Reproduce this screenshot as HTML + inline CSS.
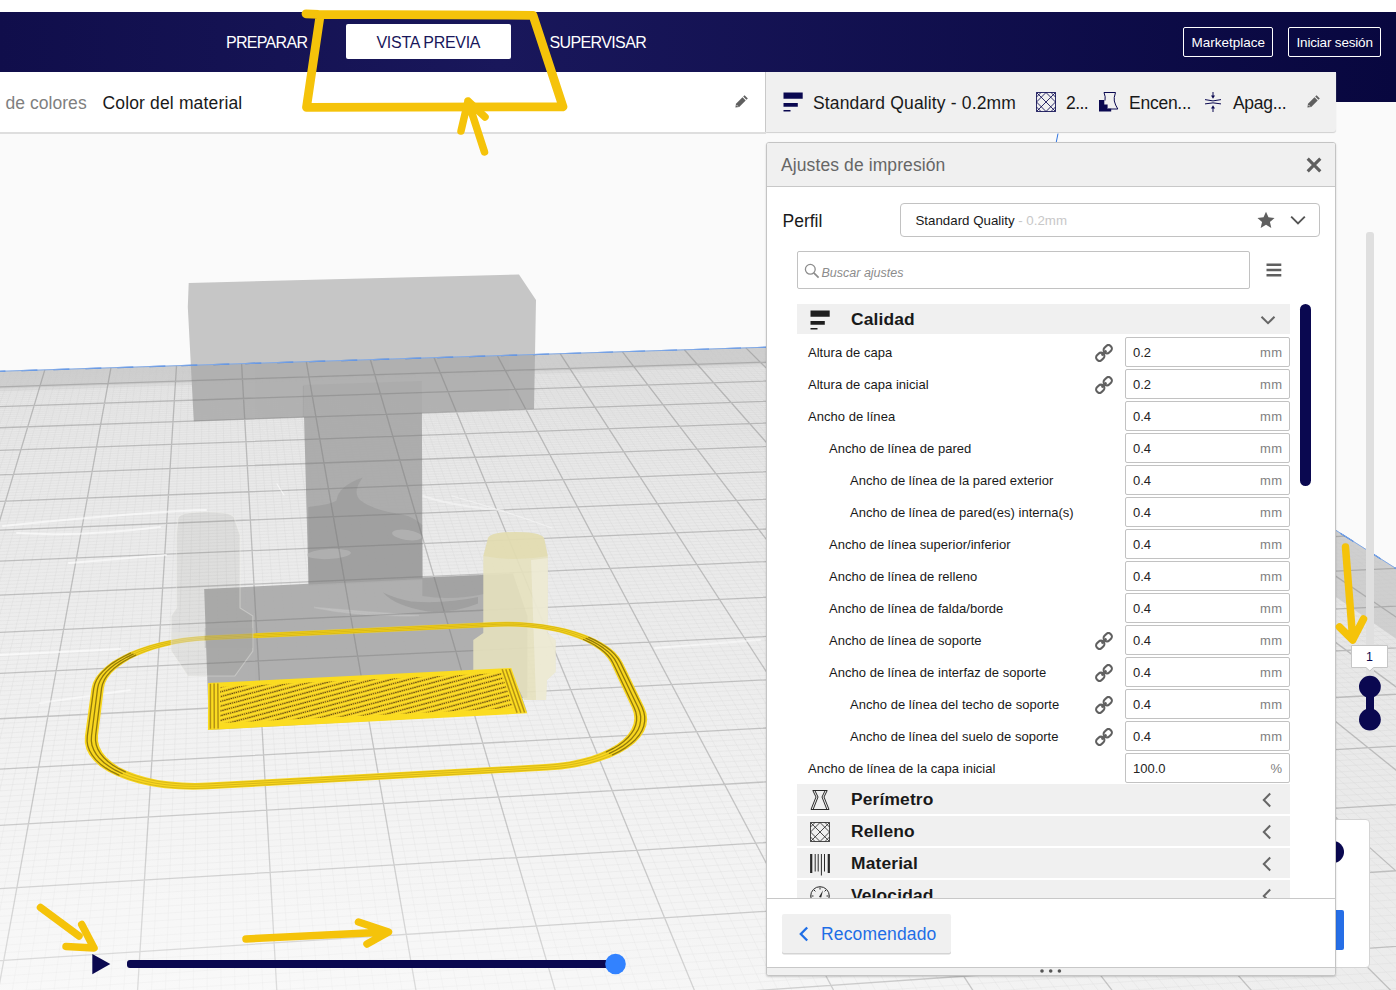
<!DOCTYPE html>
<html lang="es">
<head>
<meta charset="utf-8">
<title>Vista previa</title>
<style>
*{box-sizing:border-box;margin:0;padding:0}
html,body{width:1396px;height:990px;overflow:hidden;background:#fafafa}
body{position:relative;font-family:"Liberation Sans",sans-serif;color:#191919}
.abs{position:absolute}
.t{position:absolute;white-space:nowrap;line-height:1}
#topwhite{left:0;top:0;width:1396px;height:12px;background:#fff}
#header{left:0;top:12px;width:1396px;height:90px;background:linear-gradient(90deg,#100e4b 0,#19175b 500px,#08073f 1396px)}
#actionbar{left:0;top:72px;width:765px;height:60px;background:#fff}
#actionline{left:0;top:132px;width:766px;height:2px;background:#dedede}
#summary{left:766px;top:72px;width:570px;height:60px;background:#f0f0f0;border-radius:0 0 3px 0;box-shadow:0 1px 1px #d0d0d0}
#sumline{left:765px;top:72px;width:1px;height:60px;background:#c8c8c8}
.tab{color:#fff;font-size:16px}
#tabsel{left:346px;top:24px;width:165px;height:35px;background:#fff;border-radius:2px}
.hbtn{border:1px solid #fff;border-radius:2px;height:30px;top:27px}
.sum{font-size:17.5px;top:95px;letter-spacing:.15px}
#panel{left:766px;top:142px;width:570px;height:833.5px;background:#fff;border:1px solid #c4c4c4;border-radius:3px;box-shadow:0 1px 2px rgba(0,0,0,.18)}
#phead{left:767px;top:143px;width:568px;height:44px;background:#f0f0f0;border-bottom:1px solid #c8c8c8;border-radius:2px 2px 0 0}
#listclip{left:767px;top:296px;width:568px;height:602px;overflow:hidden}
#listclip>div{position:absolute;left:-767px;top:-296px;width:1396px;height:990px}
.cat{left:797px;width:493px;height:30px;background:#f0f0f0}
.catname{font-weight:bold;font-size:17.4px;letter-spacing:.15px;left:851px;color:#191919}
.row{font-size:13px;color:#191919;letter-spacing:.03px}
.inp{left:1125px;width:165px;height:30px;border:1px solid #c2c2c2;border-radius:2px;background:#fff}
.val{font-size:13px;left:1133px;color:#232323}
.unit{font-size:13px;color:#7f7f7f;letter-spacing:.4px;margin-right:-.4px}
#pfoot{left:767px;top:898px;width:568px;height:69px;background:#fff;border-top:1px solid #c8c8c8}
#pdrag{left:767px;top:966.5px;width:568px;height:8px;background:#f0f0f0;border-top:1px solid #c8c8c8;border-radius:0 0 2px 2px}
</style>
</head>
<body>
<svg class="abs" style="left:0;top:0" width="1396" height="990" viewBox="0 0 1396 990">
<defs>
<radialGradient id="pfill" gradientUnits="userSpaceOnUse" cx="0" cy="0" r="950" gradientTransform="translate(150 1300) scale(2 1)"><stop offset=".3" stop-color="#f3f3f3"/><stop offset=".4" stop-color="#f2f2f2"/><stop offset=".5" stop-color="#f1f1f1"/><stop offset=".544" stop-color="#f1f1f1"/><stop offset=".737" stop-color="#ebebeb"/><stop offset=".916" stop-color="#e7e7e7"/><stop offset="1" stop-color="#e3e3e3"/></radialGradient>
<radialGradient id="fade" gradientUnits="userSpaceOnUse" cx="0" cy="0" r="950" gradientTransform="translate(150 1300) scale(2 1)"><stop offset=".3" stop-color="#fff" stop-opacity=".5"/><stop offset=".4" stop-color="#fff" stop-opacity=".4"/><stop offset=".5" stop-color="#fff" stop-opacity=".22"/><stop offset=".544" stop-color="#fff" stop-opacity=".14"/><stop offset=".737" stop-color="#fff" stop-opacity=".07"/><stop offset=".916" stop-color="#fff" stop-opacity=".035"/><stop offset="1" stop-color="#fff" stop-opacity="0"/></radialGradient>
<clipPath id="plateclip"><path d="M-362.4 382.6L1034.8 338.8L2117 1027.1L-1277.5 1289.2Z"/></clipPath>
<clipPath id="modelclip"><path d="M188.7 283L519 274.4L536 300L534 409L193.8 421.3L187.8 307ZM303.2 385L421.8 381L422.5 580L308.6 586ZM204.2 589L308.5 583.8L422.5 577.5L513 573.5L527.5 616L527.3 698L522.3 698L527.1 712.2L209 730Z"/></clipPath>
<pattern id="infill" width="2.2" height="4.6" patternUnits="userSpaceOnUse" patternTransform="rotate(-15)"><rect width="2.2" height="4.6" fill="#efc526"/><rect width="2.2" height="1.6" fill="#fde226"/><rect x=".2" y="2.6" width="1.15" height="1.15" fill="#3d3206"/></pattern></defs>
<rect width="1396" height="990" fill="#fafafa"/>
<g id="model-bg" fill="#c6c6c6"><path d="M188.7 283L519 274.4L536 300L534 409L193.8 421.3L187.8 307ZM303.2 385L421.8 381L422.5 580L308.6 586ZM204.2 589L308.5 583.8L422.5 577.5L513 573.5L527.5 616L527.3 698L522.3 698L527.1 712.2L209 730Z"/></g>
<path d="M-362.4 382.6L1034.8 338.8L2117 1027.1L-1277.5 1289.2Z" fill="url(#pfill)"/>
<path d="M-362.4 382.6L1034.8 338.8L1059.4 354.5L-380.9 401ZM967.7 341L1034.8 338.8L2117 1027.1L1970.9 1038.4Z" fill="#cfcfcf"/>
<path d="M-380.9 401L990.3 356.7L993.8 359.1L-383.8 403.9Z" fill="#dbdbdb"/>
<path d="M-355.5 382.4L-1258.6 1287.7M-348.5 382.2L-1239.7 1286.2M-341.6 382L-1220.9 1284.8M-334.7 381.8L-1202.1 1283.3M-327.8 381.5L-1183.3 1281.9M-320.8 381.3L-1164.6 1280.4M-313.9 381.1L-1145.9 1279M-307 380.9L-1127.3 1277.6M-300.1 380.7L-1108.7 1276.1M-286.4 380.2L-1071.6 1273.3M-279.5 380L-1053.1 1271.8M-272.6 379.8L-1034.6 1270.4M-265.7 379.6L-1016.2 1269M-258.9 379.4L-997.8 1267.6M-252 379.2L-979.4 1266.1M-245.2 378.9L-961.1 1264.7M-238.3 378.7L-942.8 1263.3M-231.5 378.5L-924.5 1261.9M-217.8 378.1L-888.1 1259.1M-211 377.9L-870 1257.7M-204.1 377.7L-851.9 1256.3M-197.3 377.5L-833.8 1254.9M-190.5 377.2L-815.7 1253.5M-183.7 377L-797.7 1252.1M-176.9 376.8L-779.8 1250.7M-170.1 376.6L-761.8 1249.3M-163.3 376.4L-743.9 1248M-149.7 376L-708.2 1245.2M-142.9 375.7L-690.4 1243.8M-136.2 375.5L-672.6 1242.5M-129.4 375.3L-654.9 1241.1M-122.6 375.1L-637.2 1239.7M-115.9 374.9L-619.5 1238.4M-109.1 374.7L-601.9 1237M-102.4 374.5L-584.3 1235.6M-95.6 374.3L-566.8 1234.3M-82.2 373.8L-531.7 1231.6M-75.5 373.6L-514.3 1230.2M-68.7 373.4L-496.8 1228.9M-62 373.2L-479.4 1227.5M-55.3 373L-462.1 1226.2M-48.6 372.8L-444.7 1224.9M-41.9 372.6L-427.4 1223.5M-35.2 372.4L-410.2 1222.2M-28.5 372.2L-392.9 1220.9M-15.1 371.7L-358.6 1218.2M-8.5 371.5L-341.4 1216.9M-1.8 371.3L-324.3 1215.6M4.9 371.1L-307.2 1214.3M11.5 370.9L-290.2 1212.9M18.2 370.7L-273.2 1211.6M24.8 370.5L-256.2 1210.3M31.5 370.3L-239.3 1209M38.1 370.1L-222.3 1207.7M51.4 369.7L-188.6 1205.1M58 369.5L-171.8 1203.8M64.7 369.2L-155 1202.5M71.3 369L-138.2 1201.2M77.9 368.8L-121.5 1199.9M84.5 368.6L-104.8 1198.6M91.1 368.4L-88.2 1197.3M97.7 368.2L-71.5 1196.1M104.3 368L-54.9 1194.8M117.5 367.6L-21.8 1192.2M124 367.4L-5.3 1191M130.6 367.2L11.2 1189.7M137.2 367L27.6 1188.4M143.7 366.8L44 1187.1M150.3 366.6L60.4 1185.9M156.9 366.4L76.8 1184.6M163.4 366.1L93.1 1183.4M169.9 365.9L109.4 1182.1M183 365.5L141.9 1179.6M189.5 365.3L158.1 1178.3M196.1 365.1L174.3 1177.1M202.6 364.9L190.5 1175.8M209.1 364.7L206.6 1174.6M215.6 364.5L222.7 1173.4M222.1 364.3L238.7 1172.1M228.6 364.1L254.8 1170.9M235.1 363.9L270.8 1169.6M248.1 363.5L302.7 1167.2M254.6 363.3L318.6 1165.9M261.1 363.1L334.5 1164.7M267.5 362.9L350.4 1163.5M274 362.7L366.2 1162.3M280.5 362.5L382 1161.1M286.9 362.3L397.8 1159.8M293.4 362.1L413.5 1158.6M299.8 361.9L429.2 1157.4M312.7 361.5L460.6 1155M319.1 361.3L476.2 1153.8M325.6 361.1L491.8 1152.6M332 360.9L507.4 1151.4M338.4 360.7L523 1150.2M344.8 360.5L538.5 1149M351.2 360.3L554 1147.8M357.6 360.1L569.4 1146.6M364 359.9L584.9 1145.4M376.8 359.5L615.7 1143M383.2 359.3L631 1141.8M389.6 359.1L646.3 1140.6M396 358.9L661.6 1139.5M402.4 358.7L676.9 1138.3M408.7 358.5L692.2 1137.1M415.1 358.3L707.4 1135.9M421.4 358.1L722.6 1134.8M427.8 357.9L737.7 1133.6M440.5 357.5L768 1131.3M446.8 357.3L783.1 1130.1M453.2 357.1L798.1 1128.9M459.5 356.9L813.2 1127.8M465.8 356.7L828.2 1126.6M472.2 356.5L843.2 1125.5M478.5 356.3L858.1 1124.3M484.8 356.1L873 1123.2M491.1 355.9L887.9 1122M503.7 355.5L917.7 1119.7M510 355.3L932.5 1118.6M516.3 355.1L947.3 1117.4M522.6 354.9L962 1116.3M528.8 354.7L976.8 1115.1M535.1 354.5L991.5 1114M541.4 354.3L1006.2 1112.9M547.7 354.1L1020.9 1111.7M553.9 353.9L1035.5 1110.6M566.4 353.5L1064.7 1108.4M572.7 353.3L1079.3 1107.2M578.9 353.1L1093.8 1106.1M585.2 352.9L1108.3 1105M591.4 352.7L1122.8 1103.9M597.6 352.5L1137.3 1102.8M603.9 352.3L1151.7 1101.6M610.1 352.2L1166.2 1100.5M616.3 352L1180.5 1099.4M628.7 351.6L1209.3 1097.2M634.9 351.4L1223.6 1096.1M641.1 351.2L1237.9 1095M647.3 351L1252.1 1093.9M653.5 350.8L1266.4 1092.8M659.7 350.6L1280.6 1091.7M665.9 350.4L1294.8 1090.6M672.1 350.2L1309 1089.5M678.2 350L1323.1 1088.4M690.6 349.6L1351.3 1086.2M696.7 349.4L1365.4 1085.1M702.9 349.2L1379.4 1084.1M709 349.1L1393.5 1083M715.2 348.9L1407.5 1081.9M721.3 348.7L1421.5 1080.8M727.5 348.5L1435.4 1079.7M733.6 348.3L1449.3 1078.7M739.7 348.1L1463.2 1077.6M752 347.7L1491 1075.4M758.1 347.5L1504.8 1074.4M764.2 347.3L1518.6 1073.3M770.3 347.1L1532.4 1072.2M776.4 346.9L1546.2 1071.2M782.5 346.8L1559.9 1070.1M788.6 346.6L1573.7 1069.1M794.7 346.4L1587.4 1068M800.8 346.2L1601 1067M812.9 345.8L1628.3 1064.8M819 345.6L1641.9 1063.8M825.1 345.4L1655.5 1062.7M831.2 345.2L1669.1 1061.7M837.2 345L1682.6 1060.7M843.3 344.8L1696.1 1059.6M849.3 344.7L1709.6 1058.6M855.4 344.5L1723.1 1057.5M861.4 344.3L1736.5 1056.5M873.5 343.9L1763.4 1054.4M879.5 343.7L1776.7 1053.4M885.5 343.5L1790.1 1052.4M891.6 343.3L1803.4 1051.3M897.6 343.1L1816.7 1050.3M903.6 343L1830 1049.3M909.6 342.8L1843.3 1048.3M915.6 342.6L1856.6 1047.2M921.6 342.4L1869.8 1046.2M933.6 342L1896.2 1044.2M939.6 341.8L1909.3 1043.2M945.6 341.6L1922.5 1042.1M951.5 341.5L1935.6 1041.1M957.5 341.3L1948.7 1040.1M963.5 341.1L1961.8 1039.1M969.4 340.9L1974.8 1038.1M975.4 340.7L1987.8 1037.1M981.4 340.5L2000.8 1036.1M993.3 340.1L2026.8 1034.1M999.2 340L2039.7 1033.1M1005.2 339.8L2052.7 1032.1M1011.1 339.6L2065.6 1031.1M1017 339.4L2078.5 1030.1M1022.9 339.2L2091.3 1029.1M1028.9 339L2104.2 1028.1M1034.8 338.8L2117 1027.1M-363.1 383.3L1035.7 339.4M-365 385.2L1038.3 341M-366.9 387.1L1040.8 342.7M-368.9 389.1L1043.4 344.3M-370.9 391L1046 346M-372.9 393L1048.7 347.7M-374.9 395L1051.3 349.4M-376.9 397L1054 351.1M-380.9 401L1059.4 354.5M-383 403L1062.1 356.2M-385.1 405.1L1064.8 357.9M-387.2 407.2L1067.6 359.7M-389.3 409.2L1070.3 361.4M-391.4 411.3L1073.1 363.2M-393.5 413.4L1075.9 365M-395.6 415.6L1078.7 366.8M-397.8 417.7L1081.6 368.6M-402.2 422L1087.3 372.2M-404.4 424.2L1090.2 374.1M-406.6 426.4L1093.1 375.9M-408.8 428.6L1096.1 377.8M-411.1 430.9L1099 379.7M-413.4 433.1L1102 381.6M-415.6 435.4L1105 383.5M-418 437.7L1108 385.4M-420.3 440L1111 387.3M-425 444.6L1117.2 391.2M-427.3 447L1120.3 393.2M-429.7 449.3L1123.4 395.2M-432.1 451.7L1126.5 397.2M-434.6 454.1L1129.7 399.2M-437 456.5L1132.9 401.2M-439.5 459L1136.1 403.3M-442 461.5L1139.3 405.3M-444.5 463.9L1142.5 407.4M-449.5 468.9L1149.1 411.6M-452.1 471.5L1152.4 413.7M-454.7 474L1155.8 415.8M-457.3 476.6L1159.2 417.9M-459.9 479.2L1162.5 420.1M-462.5 481.8L1166 422.3M-465.2 484.5L1169.4 424.5M-467.9 487.1L1172.9 426.7M-470.6 489.8L1176.4 428.9M-476.1 495.2L1183.4 433.4M-478.8 498L1187 435.6M-481.6 500.7L1190.6 437.9M-484.5 503.5L1194.2 440.2M-487.3 506.3L1197.8 442.5M-490.2 509.2L1201.5 444.9M-493 512L1205.2 447.2M-495.9 514.9L1209 449.6M-498.9 517.8L1212.7 452M-504.8 523.7L1220.3 456.8M-507.8 526.7L1224.2 459.3M-510.9 529.7L1228 461.7M-513.9 532.7L1231.9 464.2M-517 535.8L1235.9 466.7M-520.1 538.9L1239.8 469.3M-523.3 542L1243.8 471.8M-526.4 545.1L1247.8 474.4M-529.6 548.3L1251.9 476.9M-536.1 554.7L1260.1 482.2M-539.4 557.9L1264.3 484.8M-542.7 561.2L1268.5 487.5M-546 564.5L1272.7 490.1M-549.4 567.9L1276.9 492.8M-552.8 571.2L1281.2 495.6M-556.2 574.6L1285.5 498.3M-559.7 578L1289.9 501.1M-563.2 581.5L1294.3 503.9M-570.2 588.5L1303.2 509.6M-573.8 592.1L1307.7 512.4M-577.4 595.6L1312.2 515.3M-581.1 599.3L1316.8 518.2M-584.8 602.9L1321.4 521.1M-588.5 606.6L1326.1 524.1M-592.2 610.3L1330.8 527.1M-596 614.1L1335.5 530.1M-599.9 617.9L1340.3 533.1M-607.6 625.6L1350 539.3M-611.6 629.5L1354.9 542.4M-615.5 633.4L1359.8 545.5M-619.6 637.4L1364.8 548.7M-623.6 641.4L1369.8 551.9M-627.7 645.4L1374.9 555.1M-631.8 649.5L1380 558.4M-636 653.7L1385.1 561.7M-640.2 657.8L1390.3 565M-648.8 666.3L1400.9 571.7M-653.1 670.6L1406.2 575.1M-657.5 675L1411.6 578.5M-662 679.4L1417.1 582M-666.4 683.8L1422.6 585.5M-671 688.3L1428.1 589M-675.5 692.8L1433.7 592.6M-680.2 697.4L1439.4 596.2M-684.8 702L1445.1 599.8M-694.3 711.4L1456.6 607.1M-699.1 716.2L1462.5 610.9M-704 721L1468.4 614.6M-708.9 725.9L1474.4 618.4M-713.9 730.8L1480.4 622.2M-718.9 735.8L1486.5 626.1M-724 740.8L1492.6 630M-729.1 745.9L1498.8 634M-734.3 751.1L1505.1 638M-744.9 761.6L1517.8 646M-750.3 766.9L1524.3 650.1M-755.7 772.3L1530.8 654.3M-761.2 777.7L1537.3 658.5M-766.8 783.2L1544 662.7M-772.4 788.8L1550.7 667M-778.1 794.4L1557.5 671.3M-783.8 800.1L1564.3 675.6M-789.7 805.9L1571.3 680M-801.5 817.6L1585.3 689M-807.6 823.6L1592.4 693.5M-813.7 829.6L1599.7 698.1M-819.8 835.8L1606.9 702.7M-826.1 842L1614.3 707.4M-832.4 848.2L1621.7 712.2M-838.8 854.6L1629.3 716.9M-845.3 861L1636.9 721.8M-851.9 867.5L1644.6 726.7M-865.3 880.8L1660.2 736.6M-872.1 887.5L1668.1 741.6M-879 894.4L1676.1 746.7M-886 901.3L1684.2 751.9M-893 908.3L1692.5 757.1M-900.2 915.4L1700.7 762.4M-907.5 922.6L1709.1 767.7M-914.9 929.9L1717.6 773.1M-922.3 937.3L1726.2 778.6M-937.5 952.4L1743.7 789.7M-945.3 960.1L1752.5 795.3M-953.2 967.9L1761.5 801.1M-961.2 975.8L1770.6 806.8M-969.3 983.8L1779.8 812.7M-977.5 991.9L1789.1 818.6M-985.8 1000.2L1798.5 824.6M-994.2 1008.5L1808.1 830.7M-1002.8 1017L1817.7 836.8M-1020.3 1034.3L1837.4 849.3M-1029.2 1043.2L1847.4 855.6M-1038.2 1052.1L1857.5 862.1M-1047.4 1061.2L1867.7 868.6M-1056.8 1070.5L1878.1 875.2M-1066.2 1079.9L1888.6 881.9M-1075.9 1089.4L1899.3 888.7M-1085.6 1099.1L1910.1 895.5M-1095.5 1108.9L1921 902.5M-1115.8 1129L1943.2 916.6M-1126.2 1139.2L1954.6 923.8M-1136.7 1149.7L1966.1 931.2M-1147.4 1160.3L1977.8 938.6M-1158.3 1171.1L1989.6 946.1M-1169.4 1182L2001.5 953.7M-1180.6 1193.1L2013.7 961.4M-1192 1204.5L2026 969.2M-1203.6 1216L2038.4 977.2M-1227.4 1239.5L2063.9 993.4M-1239.6 1251.6L2076.9 1001.6M-1252 1263.9L2090.1 1010M-1264.7 1276.4L2103.4 1018.5M-1277.5 1289.2L2117 1027.1" stroke="#c9c9c9" stroke-opacity=".2" stroke-width="1" fill="none"/>
<path d="M-362.4 382.6L-1277.5 1289.2M-293.2 380.5L-1090.1 1274.7M-224.6 378.3L-906.3 1260.5M-156.5 376.2L-726 1246.6M-88.9 374.1L-549.2 1232.9M-21.8 372L-375.7 1219.5M44.8 369.9L-205.5 1206.4M110.9 367.8L-38.4 1193.5M176.5 365.7L125.7 1180.8M241.6 363.7L286.8 1168.4M306.3 361.7L444.9 1156.2M370.4 359.7L600.3 1144.2M434.1 357.7L752.9 1132.4M497.4 355.7L902.8 1120.9M560.2 353.7L1050.1 1109.5M622.5 351.8L1194.9 1098.3M684.4 349.8L1337.2 1087.3M745.9 347.9L1477.1 1076.5M806.9 346L1614.7 1065.9M867.4 344.1L1750 1055.5M927.6 342.2L1883 1045.2M987.3 340.3L2013.8 1035.1M-378.9 399L1056.7 352.8M-400 419.9L1084.4 370.4M-422.6 442.3L1114.1 389.3M-447 466.4L1145.8 409.5M-473.3 492.5L1179.9 431.1M-501.8 520.8L1216.5 454.4M-532.8 551.5L1256 479.5M-566.7 585L1298.7 506.7M-603.7 621.7L1345.1 536.2M-644.5 662.1L1395.6 568.3M-689.5 706.7L1450.8 603.4M-739.6 756.3L1511.4 642M-795.6 811.7L1578.2 684.5M-858.5 874.1L1652.3 731.6M-929.9 944.8L1734.9 784.1M-1011.5 1025.6L1827.5 843M-1105.6 1118.8L1932 909.5M-1215.4 1227.6L2051.1 985.2" stroke="#8a8a8a" stroke-opacity=".5" stroke-width="1.3" fill="none"/>
<path d="M-362.4 382.6L1034.8 338.8L2117 1027.1L-1277.5 1289.2Z" fill="url(#fade)"/>
<g fill="none" stroke="#fff" stroke-opacity=".6" stroke-width="2" stroke-linecap="round"><path d="M3 526Q70 519 129 514.5T206 510"/><path d="M17 533Q80 537 160 527"/><path d="M69 563Q120 559 166 555"/><path d="M0 655Q60 652 120 649"/><path d="M423 496Q452 506 503 510.5" stroke-opacity=".4"/><path d="M452 496Q509 512 552 528" stroke-width="1.2" stroke-opacity=".4"/><path d="M277 484L284 495" stroke-width="1.2"/><path d="M130 690L40 703" stroke-opacity=".5"/><path d="M655 648L760 640" stroke-opacity=".5"/></g>
<g id="model-plate" clip-path="url(#plateclip)"><g opacity=".93"><path d="M188.7 283L519 274.4L536 300L534 409L193.8 421.3L187.8 307Z" fill="#aeaeae"/><path d="M204.2 589L308.5 583.8L422.5 577.5L513 573.5L527.5 616L527.3 698L522.3 698L527.1 712.2L209 730Z" fill="#ababab"/><path d="M303.2 385L421.8 381L422.5 580L308.6 586Z" fill="#a8a8a8"/></g><path d="M308.3 507Q330 505 336.5 500.6Q338 486 362.7 477.4Q352 492 360 500Q372 510 403 514.7Q414 517 422.3 525L422.5 579L308.5 584.5Z" fill="#858585" fill-opacity=".3"/><ellipse cx="407" cy="535" rx="15" ry="5" fill="#bdbdbd" fill-opacity=".55" transform="rotate(8 407 535)"/><ellipse cx="329" cy="554" rx="22" ry="5" fill="#bdbdbd" fill-opacity=".5" transform="rotate(-3 329 554)"/><path d="M422.3 578L484 575L484 594Q452 601 422.3 596Z" fill="#858585" fill-opacity=".28"/><path d="M383 592.5Q395 606 428 611.5Q455 613 478 603.5L478 597Q446 604 411 601.5Q394 598 383 592.5Z" fill="#858585" fill-opacity=".35"/><path d="M314 607.5Q360 617 419 615.5Q365 612 314 607.5Z" fill="#c4c4c4" fill-opacity=".6" stroke="#c4c4c4" stroke-opacity=".5" stroke-width="1.5"/><path d="M303.4 386V417" stroke="#999" stroke-opacity=".35" stroke-width="1" fill="none"/><g clip-path="url(#modelclip)"><path d="M-362.4 382.6L-1277.5 1289.2M-293.2 380.5L-1090.1 1274.7M-224.6 378.3L-906.3 1260.5M-156.5 376.2L-726 1246.6M-88.9 374.1L-549.2 1232.9M-21.8 372L-375.7 1219.5M44.8 369.9L-205.5 1206.4M110.9 367.8L-38.4 1193.5M176.5 365.7L125.7 1180.8M241.6 363.7L286.8 1168.4M306.3 361.7L444.9 1156.2M370.4 359.7L600.3 1144.2M434.1 357.7L752.9 1132.4M497.4 355.7L902.8 1120.9M560.2 353.7L1050.1 1109.5M622.5 351.8L1194.9 1098.3M684.4 349.8L1337.2 1087.3M745.9 347.9L1477.1 1076.5M806.9 346L1614.7 1065.9M867.4 344.1L1750 1055.5M927.6 342.2L1883 1045.2M987.3 340.3L2013.8 1035.1M-378.9 399L1056.7 352.8M-400 419.9L1084.4 370.4M-422.6 442.3L1114.1 389.3M-447 466.4L1145.8 409.5M-473.3 492.5L1179.9 431.1M-501.8 520.8L1216.5 454.4M-532.8 551.5L1256 479.5M-566.7 585L1298.7 506.7M-603.7 621.7L1345.1 536.2M-644.5 662.1L1395.6 568.3M-689.5 706.7L1450.8 603.4M-739.6 756.3L1511.4 642M-795.6 811.7L1578.2 684.5M-858.5 874.1L1652.3 731.6M-929.9 944.8L1734.9 784.1M-1011.5 1025.6L1827.5 843M-1105.6 1118.8L1932 909.5M-1215.4 1227.6L2051.1 985.2" stroke="#6e6e6e" stroke-opacity=".3" stroke-width="1.3" fill="none"/></g></g>
<path d="M-362.4 382.6L1034.8 338.8L2117 1027.1" stroke="#2f74e0" stroke-width="1.2" fill="none" stroke-dasharray="16 16"/>
<path d="M-362.4 382.6L1034.8 338.8L2117 1027.1" stroke="#7fa8e6" stroke-width="1" fill="none"/>
<path d="M487.5 540Q487.5 532 516 532Q544.5 532 544.5 540L547.8 556L547.8 633L555.6 640L555.6 672L547 680L546 700L524 700L512 676L473.3 676L473.3 640L483.3 633L483.3 556Z" fill="#e6e1be" fill-opacity=".9"/>
<path d="M487.5 540Q487.5 532 516 532Q544.5 532 544.5 540L547.8 556Q516 562 483.3 556Z" fill="#ddd59a" fill-opacity=".35"/>
<path d="M531 560L547.8 558L547.8 633L555.6 640L555.6 672L547 680L546 700L536 700Z" fill="#f4f2e6" fill-opacity=".5"/>
<path d="M208.1 683L511.3 668L527.2 713.3L208 729.9Z" fill="#fbdc20"/>
<path d="M220 686.9L501.3 672.9L513.2 708L220.4 723.1Z" fill="url(#infill)"/>
<path d="M210.4 683.7L210.4 728.8M509.4 669L524.6 712.5" stroke="#9c7912" stroke-opacity=".75" stroke-width="1.5" fill="none"/>
<path d="M214.1 683.6L214.3 728.6M505.8 669.2L520.9 712.7" stroke="#9c7912" stroke-opacity=".75" stroke-width="1.5" fill="none"/>
<path d="M217.8 683.4L218.1 728.4M502.2 669.3L517.1 712.8" stroke="#9c7912" stroke-opacity=".75" stroke-width="1.5" fill="none"/>
<path d="M495.1 622.1L507.1 621.8L519.1 622.1L531.1 622.9L542.8 624.3L554.2 626.2L565.2 628.5L575.6 631.4L585.2 634.8L594.1 638.6L602.1 642.7L609 647.3L614.8 652.1L619.3 657.2L622.6 662.5L644.3 707.2L646.5 713.2L647.2 719.3L646.4 725.4L644 731.5L640.1 737.3L634.7 743L627.8 748.3L619.5 753.2L609.9 757.7L599.1 761.6L587.3 764.8L574.6 767.5L561.3 769.4L547.4 770.5L207.8 789.3L193.2 789.7L178.8 789.3L164.9 788.2L151.5 786.2L139 783.5L127.4 780.1L117 776.1L107.9 771.5L100.2 766.4L94 760.8L89.4 755L86.3 748.9L84.8 742.6L84.9 736.3L91.4 688.7L92.9 683L95.8 677.4L100.1 671.9L105.7 666.7L112.4 661.6L120.3 656.9L129.1 652.6L138.8 648.7L149.2 645.2L160.3 642.2L171.9 639.7L183.8 637.8L196 636.4L208.3 635.5ZM496.8 626.8L507.5 626.5L518.3 626.7L529.1 627.5L539.6 628.7L549.9 630.4L559.7 632.6L569 635.2L577.7 638.2L585.6 641.6L592.7 645.4L598.8 649.4L603.9 653.8L608 658.4L610.8 663.1L631.9 707.8L633.8 713.2L634.3 718.7L633.5 724.1L631.3 729.5L627.8 734.7L622.9 739.7L616.7 744.5L609.3 748.8L600.7 752.7L591.1 756.2L580.6 759.1L569.3 761.4L557.4 763.1L545.1 764.1L207.8 782.6L194.9 783L182.1 782.6L169.7 781.6L157.8 779.9L146.7 777.5L136.4 774.5L127.1 770.9L119 766.9L112.1 762.3L106.5 757.5L102.3 752.3L99.5 746.8L98 741.3L98 735.6L103.9 688.1L105.1 683L107.7 678L111.5 673.1L116.4 668.4L122.4 663.9L129.4 659.6L137.2 655.7L145.9 652.2L155.2 649.1L165.2 646.4L175.5 644.1L186.3 642.3L197.2 641.1L208.3 640.3Z" fill="#f8d61e" fill-rule="evenodd"/>
<path d="M583.6 639.5L589.7 642.3M589.7 642.3L595.1 645.3M595.1 645.3L600 648.6M600 648.6L604.3 652M604.3 652L607.9 655.5M607.9 655.5L610.8 659.2M610.8 659.2L613 663M613 663L634.2 707.7M634.2 707.7L635.8 712M635.8 712L636.6 716.3M636.6 716.3L636.6 720.7M636.6 720.7L635.7 725M635.7 725L634 729.3M634 729.3L631.4 733.4M631.4 733.4L628 737.5M628 737.5L623.7 741.4M623.7 741.4L618.7 745.2M618.7 745.2L612.9 748.7M612.9 748.7L606.4 751.9M125.3 771.9L118.7 768.7M118.7 768.7L112.9 765.2M112.9 765.2L107.9 761.5M107.9 761.5L103.7 757.5M103.7 757.5L100.3 753.4M100.3 753.4L97.8 749.1M97.8 749.1L96.2 744.7M96.2 744.7L95.5 740.2M95.5 740.2L95.6 735.7M95.6 735.7L101.6 688.2M101.6 688.2L102.5 684.2M102.5 684.2L104.2 680.2M104.2 680.2L106.7 676.2M106.7 676.2L109.9 672.3M109.9 672.3L113.8 668.6M113.8 668.6L118.4 664.9M118.4 664.9L123.6 661.5M123.6 661.5L129.4 658.2M129.4 658.2L135.7 655.2M586.2 638.4L592.5 641.4M592.5 641.4L598.1 644.5M598.1 644.5L603.2 647.9M603.2 647.9L607.7 651.4M607.7 651.4L611.4 655.1M611.4 655.1L614.4 658.9M614.4 658.9L616.7 662.8M616.7 662.8L638.1 707.5M638.1 707.5L639.8 712M639.8 712L640.7 716.4M640.7 716.4L640.6 720.9M640.6 720.9L639.8 725.4M639.8 725.4L638 729.9M638 729.9L635.3 734.2M635.3 734.2L631.8 738.4M631.8 738.4L627.4 742.5M627.4 742.5L622.2 746.4M622.2 746.4L616.2 750M616.2 750L609.5 753.4M122.1 773.5L115.3 770.2M115.3 770.2L109.3 766.5M109.3 766.5L104.1 762.7M104.1 762.7L99.7 758.6M99.7 758.6L96.3 754.3M96.3 754.3L93.7 749.8M93.7 749.8L92 745.3M92 745.3L91.3 740.6M91.3 740.6L91.5 736M91.5 736L97.6 688.4M97.6 688.4L98.6 684.2M98.6 684.2L100.4 680.1M100.4 680.1L102.9 676M102.9 676L106.3 671.9M106.3 671.9L110.4 668M110.4 668L115.1 664.3M115.1 664.3L120.6 660.7M120.6 660.7L126.6 657.3M126.6 657.3L133.1 654.2M588.8 637.4L595.3 640.4M595.3 640.4L601.1 643.7M601.1 643.7L606.4 647.2M606.4 647.2L611 650.8M611 650.8L614.9 654.6M614.9 654.6L618.1 658.6M618.1 658.6L620.5 662.6M620.5 662.6L642.1 707.3M642.1 707.3L643.8 711.9M643.8 711.9L644.7 716.5M644.7 716.5L644.7 721.2M644.7 721.2L643.8 725.9M643.8 725.9L642 730.5M642 730.5L639.3 735M639.3 735L635.6 739.4M635.6 739.4L631.1 743.6M631.1 743.6L625.7 747.6M625.7 747.6L619.5 751.4M619.5 751.4L612.5 754.9M118.9 775.1L111.8 771.7M111.8 771.7L105.6 767.9M105.6 767.9L100.2 763.9M100.2 763.9L95.7 759.6M95.7 759.6L92.2 755.1M92.2 755.1L89.5 750.5M89.5 750.5L87.8 745.8M87.8 745.8L87.1 741M87.1 741L87.3 736.2M87.3 736.2L93.7 688.6M93.7 688.6L94.7 684.3M94.7 684.3L96.5 680M96.5 680L99.2 675.7M99.2 675.7L102.7 671.6M102.7 671.6L107 667.5M107 667.5L111.9 663.6M111.9 663.6L117.5 660M117.5 660L123.8 656.5M123.8 656.5L130.6 653.2" stroke="#6a5406" stroke-opacity=".72" stroke-width="1.3" stroke-linecap="round" fill="none"/>
<path d="M496.5 625.9L505 625.7M505 625.7L513.6 625.7M513.6 625.7L522.1 626.1M522.1 626.1L530.6 626.8M530.6 626.8L539 627.7M539 627.7L547.2 629M547.2 629L555.2 630.5M555.2 630.5L562.9 632.4M562.9 632.4L570.2 634.5M570.2 634.5L577.1 636.8M577.1 636.8L583.6 639.5M606.4 751.9L599.2 754.9M599.2 754.9L591.4 757.5M591.4 757.5L583.1 759.8M583.1 759.8L574.2 761.8M574.2 761.8L565 763.3M565 763.3L555.4 764.5M555.4 764.5L545.5 765.3M545.5 765.3L207.8 783.9M207.8 783.9L197.5 784.2M197.5 784.2L187.3 784.1M187.3 784.1L177.2 783.6M177.2 783.6L167.4 782.6M167.4 782.6L158 781.3M158 781.3L149 779.5M149 779.5L140.5 777.3M140.5 777.3L132.6 774.8M132.6 774.8L125.3 771.9M135.7 655.2L142.6 652.3M142.6 652.3L149.8 649.7M149.8 649.7L157.5 647.4M157.5 647.4L165.4 645.3M165.4 645.3L173.7 643.5M173.7 643.5L182.1 642.1M182.1 642.1L190.8 640.9M190.8 640.9L199.5 640M199.5 640L208.3 639.4M208.3 639.4L496.5 625.9M495.9 624.4L504.8 624.2M504.8 624.2L513.7 624.2M513.7 624.2L522.5 624.6M522.5 624.6L531.3 625.3M531.3 625.3L540 626.3M540 626.3L548.5 627.6M548.5 627.6L556.7 629.2M556.7 629.2L564.7 631.1M564.7 631.1L572.3 633.3M572.3 633.3L579.5 635.7M579.5 635.7L586.2 638.4M609.5 753.4L602 756.5M602 756.5L593.9 759.2M593.9 759.2L585.2 761.6M585.2 761.6L576 763.7M576 763.7L566.4 765.3M566.4 765.3L556.5 766.5M556.5 766.5L546.3 767.3M546.3 767.3L207.8 786M207.8 786L197.1 786.3M197.1 786.3L186.5 786.2M186.5 786.2L176 785.7M176 785.7L165.9 784.7M165.9 784.7L156 783.3M156 783.3L146.7 781.4M146.7 781.4L137.9 779.1M137.9 779.1L129.7 776.5M129.7 776.5L122.1 773.5M133.1 654.2L140.2 651.2M140.2 651.2L147.7 648.5M147.7 648.5L155.7 646.1M155.7 646.1L163.9 644M163.9 644L172.5 642.2M172.5 642.2L181.2 640.6M181.2 640.6L190.1 639.4M190.1 639.4L199.2 638.5M199.2 638.5L208.3 637.9M208.3 637.9L495.9 624.4M495.4 623L504.6 622.7M504.6 622.7L513.7 622.8M513.7 622.8L522.9 623.2M522.9 623.2L532 623.9M532 623.9L541 624.9M541 624.9L549.7 626.3M549.7 626.3L558.3 627.9M558.3 627.9L566.5 629.9M566.5 629.9L574.4 632.1M574.4 632.1L581.8 634.6M581.8 634.6L588.8 637.4M612.5 754.9L604.8 758.1M604.8 758.1L596.4 761M596.4 761L587.4 763.5M587.4 763.5L577.9 765.6M577.9 765.6L567.9 767.2M567.9 767.2L557.6 768.5M557.6 768.5L547 769.3M547 769.3L207.8 788.1M207.8 788.1L196.7 788.5M196.7 788.5L185.7 788.4M185.7 788.4L174.8 787.8M174.8 787.8L164.3 786.8M164.3 786.8L154.1 785.3M154.1 785.3L144.4 783.3M144.4 783.3L135.2 781M135.2 781L126.7 778.2M126.7 778.2L118.9 775.1M130.6 653.2L137.9 650.1M137.9 650.1L145.7 647.4M145.7 647.4L153.9 644.9M153.9 644.9L162.4 642.7M162.4 642.7L171.3 640.8M171.3 640.8L180.3 639.2M180.3 639.2L189.5 637.9M189.5 637.9L198.9 637M198.9 637L208.3 636.4M208.3 636.4L495.4 623" stroke="#6a5406" stroke-opacity=".28" stroke-width=".8" fill="none"/>
<clipPath id="cylclip"><path d="M178 519Q178 512 206 512Q234.5 512 234.5 519L240 535L240 608L252.8 616L252.8 651L234.8 676L188 676L171.2 651L171.2 616L176.5 608L176.5 535Z"/></clipPath>
<path d="M178 519Q178 512 206 512Q234.5 512 234.5 519L240 535L240 608L252.8 616L252.8 651L234.8 676L188 676L171.2 651L171.2 616L176.5 608L176.5 535Z" fill="#6e6e62" fill-opacity=".1"/>
<path d="M178 519Q178 512 206 512Q234.5 512 234.5 519L240 535L240 608L252.8 616L252.8 651L234.8 676L188 676L171.2 651L171.2 616L176.5 608L176.5 535Z" fill="none" stroke="#f4f4ee" stroke-opacity=".35" stroke-width="1.2"/>
<g clip-path="url(#cylclip)"><path d="M165 632H204.8V650H165Z" fill="#e6e6e0" fill-opacity=".45"/><path d="M204.8 628H256V648H204.8Z" fill="#a7a7a5" fill-opacity=".4"/></g><rect x="1366" y="232" width="8" height="446" rx="3" fill="#dfdfdf"/>
<rect x="1366" y="686" width="8" height="33" fill="#0a0850"/>
<circle cx="1369.9" cy="686.7" r="10.9" fill="#0a0850"/><circle cx="1369.9" cy="719.5" r="10.9" fill="#0a0850"/>
<path d="M1351.5 645.5H1387.5V667.5H1373.5L1369.8 671L1366 667.5H1351.5Z" fill="#fff" stroke="#c6c6c6" stroke-width="1"/>
<text x="1369.6" y="661" font-family="Liberation Sans, sans-serif" font-size="12.5" fill="#0a0850" text-anchor="middle">1</text>
<path d="M1058 133.5L1056.3 142" stroke="#2f74e0" stroke-width="1" fill="none"/>
<path d="M92.3 954L110.3 964L92.3 974.2Z" fill="#0a0850"/>
<rect x="127" y="960" width="490" height="8" rx="3" fill="#0a0850"/>
<circle cx="615.5" cy="964" r="10.3" fill="#3282ff"/>
</svg>
<div id="topwhite" class="abs"></div>
<div id="header" class="abs"></div>
<div id="actionbar" class="abs"></div>
<div id="actionline" class="abs"></div>
<div id="sumline" class="abs"></div>
<div id="summary" class="abs"></div>
<div id="tabsel" class="abs"></div>
<div class="t tab" style="left:226px;top:35px;letter-spacing:-.7px">PREPARAR</div>
<div class="t tab" style="left:376.5px;top:35px;color:#19175b;letter-spacing:-.3px">VISTA PREVIA</div>
<div class="t tab" style="left:549.5px;top:35px;letter-spacing:-.62px">SUPERVISAR</div>
<div class="abs hbtn" style="left:1183px;width:90px"></div>
<div class="abs hbtn" style="left:1288px;width:93px"></div>
<div class="t" style="left:1191.5px;top:35.5px;font-size:13.5px;color:#fff">Marketplace</div>
<div class="t" style="left:1296.5px;top:35.5px;font-size:13.5px;color:#fff;letter-spacing:-.18px">Iniciar sesión</div>
<div class="t sum" style="right:1309.3px;color:#7f7f7f;letter-spacing:.05px">Combinación de colores</div>
<div class="t sum" style="left:102.5px">Color del material</div>
<svg class="abs" style="left:735px;top:94.2px" width="14" height="14" viewBox="0 0 14 14"><g fill="#5f5f5f"><path d="M9.6 1.2L12.8 4.4L11.4 5.8L8.2 2.6Z"/><path d="M7.5 3.3L10.7 6.5L4.2 13L0.4 13.6L1 9.8Z"/></g><path d="M1.5 11L3 12.5" stroke="#f0f0f0" stroke-width=".9"/></svg><svg class="abs" style="left:1306.5px;top:94.2px" width="14" height="14" viewBox="0 0 14 14"><g fill="#5f5f5f"><path d="M9.6 1.2L12.8 4.4L11.4 5.8L8.2 2.6Z"/><path d="M7.5 3.3L10.7 6.5L4.2 13L0.4 13.6L1 9.8Z"/></g><path d="M1.5 11L3 12.5" stroke="#f0f0f0" stroke-width=".9"/></svg>
<svg class="abs" style="left:783px;top:92px" width="20" height="20" viewBox="0 0 20 20"><path d="M.5 .5H19.7V6.8H.5ZM.5 11.1H14.8V14.8H.5ZM.5 18H7.5V19.5H.5Z" fill="#0a0850"/></svg><svg class="abs" style="left:1036px;top:92px" width="20" height="20" viewBox="0 0 20 20"><path d="M.5 .5H19.5V19.5H.5ZM.5 .5L19.5 19.5M19.5 .5L.5 19.5M10 .5L19.5 10L10 19.5L.5 10ZM5 .5L.5 5M15 .5L19.5 5M.5 15L5 19.5M19.5 15L15 19.5" fill="none" stroke="#0a0850" stroke-width=".85"/></svg><svg class="abs" style="left:1099px;top:92px" width="20" height="20" viewBox="0 0 20 20"><path d="M5 .5H16.5Q14.6 6 15.3 9Q16.2 13 18.8 17H9" fill="none" stroke="#0a0850" stroke-width="1"/><path d="M5 .5Q6.8 5 6 8.5" fill="none" stroke="#0a0850" stroke-width="1"/><path d="M0 8H5.3V12.5H8.6V16.7H12.2V19.5H0Z" fill="#0a0850"/></svg><svg class="abs" style="left:1205px;top:92px" width="16" height="20" viewBox="0 0 16 20"><path d="M0 7.6Q8 10.2 16 7.6M0 11.9Q8 9.8 16 11.9" fill="none" stroke="#0a0850" stroke-width="1"/><path d="M8 0V5M8 20V15" stroke="#0a0850" stroke-width="1" fill="none"/><path d="M6 3.6H10L8 6.8ZM6 16.4H10L8 13.2Z" fill="#0a0850"/></svg>
<div class="t sum" style="left:813px">Standard Quality - 0.2mm</div>
<div class="t sum" style="left:1066px;letter-spacing:-.6px">2...</div>
<div class="t sum" style="left:1129px;letter-spacing:-.25px">Encen...</div>
<div class="t sum" style="left:1233px;letter-spacing:-.3px">Apag...</div>
<div class="abs" style="left:1320px;top:819px;width:50px;height:149px;background:#fff;border:1px solid #d4d4d4;border-radius:4px"></div><div class="abs" style="left:1321.5px;top:841px;width:22px;height:22px;border-radius:11px;background:#0a0850"></div><div class="abs" style="left:1320px;top:910px;width:23.5px;height:40px;background:#266ee6;border-radius:2px"></div>
<div id="panel" class="abs"></div>
<div id="phead" class="abs"></div>
<div class="t" style="left:781px;top:157.2px;font-size:17.5px;color:#666;letter-spacing:.1px">Ajustes de impresión</div>
<svg class="abs" style="left:1305px;top:155.5px" width="18" height="18" viewBox="-9 -9 18 18"><path d="M-6.3 -6.3L6.3 6.3M6.3 -6.3L-6.3 6.3" stroke="#5f5f5f" stroke-width="3.1" fill="none"/></svg>
<div class="t" style="left:782.5px;top:213px;font-size:17.5px">Perfil</div>
<div class="abs" style="left:900px;top:203px;width:420px;height:34px;border:1px solid #c2c2c2;border-radius:4px;background:#fff"></div>
<div class="t" style="left:915.5px;top:214.3px;font-size:13.3px">Standard Quality <span style="color:#c8c8c8">- 0.2mm</span></div>
<svg class="abs" style="left:1256px;top:210px" width="20" height="20" viewBox="-10.9 -10.9 21.8 21.8"><path d="M0 -9L2.7 -2.9L9.3 -2.3L4.3 2.1L5.8 8.6L0 5.2L-5.8 8.6L-4.3 2.1L-9.3 -2.3L-2.7 -2.9Z" fill="#5f5f5f"/></svg><svg class="abs" style="left:1288.5px;top:213.5px" width="18" height="12" viewBox="-9 -6 18 12"><path d="M-6.825 -3.36L0 3.36L6.825 -3.36" fill="none" stroke="#555" stroke-width="1.9"/></svg>
<div class="abs" style="left:797px;top:251px;width:453px;height:38px;border:1px solid #c2c2c2;border-radius:2px;background:#fff"></div>
<div class="t" style="left:821.5px;top:266.5px;font-size:12.5px;font-style:italic;color:#8c8c8c">Buscar ajustes</div>
<svg class="abs" style="left:804px;top:263px" width="16" height="16" viewBox="0 0 16 16"><circle cx="6.3" cy="6.3" r="4.9" fill="none" stroke="#8c8c8c" stroke-width="1.3"/><path d="M9.8 9.8L14.6 14.6" stroke="#8c8c8c" stroke-width="1.7"/></svg><svg class="abs" style="left:1265.7px;top:262.5px" width="16" height="14" viewBox="0 0 16 14"><path d="M.5 1.8H15.3M.5 7H15.3M.5 12.2H15.3" stroke="#5f5f5f" stroke-width="2.4"/></svg>
<div id="listclip" class="abs"><div>
<div class="abs cat" style="top:304px"></div>
<div class="t catname" style="top:311.3px">Calidad</div>
<svg class="abs" style="left:810px;top:310px" width="20" height="20" viewBox="0 0 20 20"><path d="M.5 .5H19.7V6.8H.5ZM.5 11.1H14.8V14.8H.5ZM.5 18H7.5V19.5H.5Z" fill="#1e1e1e"/></svg>
<svg class="abs" style="left:1258.5px;top:313.5px" width="18" height="12" viewBox="-9 -6 18 12"><path d="M-6.5 -3.2L0 3.2L6.5 -3.2" fill="none" stroke="#666" stroke-width="2"/></svg>
<div class="abs cat" style="top:784px"></div>
<div class="t catname" style="top:791.3px">Perímetro</div>
<svg class="abs" style="left:810px;top:790px" width="20" height="20" viewBox="0 0 20 20"><g fill="none" stroke="#2a2a2a" stroke-width="1"><path d="M2.8 .5H17.2L14 7L19 19.5H1L6 7Z"/><path d="M5 .8L8 7L3.2 19.2M15 .8L12 7L16.8 19.2"/></g></svg>
<svg class="abs" style="left:1261px;top:790.5px" width="12" height="18" viewBox="-6 -9 12 18"><path d="M3.2 -6.5L-3.2 0L3.2 6.5" fill="none" stroke="#666" stroke-width="2"/></svg>
<div class="abs cat" style="top:816px"></div>
<div class="t catname" style="top:823.3px">Relleno</div>
<svg class="abs" style="left:810px;top:822px" width="20" height="20" viewBox="0 0 20 20"><path d="M.5 .5H19.5V19.5H.5ZM.5 .5L19.5 19.5M19.5 .5L.5 19.5M10 .5L19.5 10L10 19.5L.5 10ZM5 .5L.5 5M15 .5L19.5 5M.5 15L5 19.5M19.5 15L15 19.5" fill="none" stroke="#2a2a2a" stroke-width=".85"/></svg>
<svg class="abs" style="left:1261px;top:822.5px" width="12" height="18" viewBox="-6 -9 12 18"><path d="M3.2 -6.5L-3.2 0L3.2 6.5" fill="none" stroke="#666" stroke-width="2"/></svg>
<div class="abs cat" style="top:848px"></div>
<div class="t catname" style="top:855.3px">Material</div>
<svg class="abs" style="left:810px;top:852px" width="20" height="24" viewBox="0 0 20 24"><g fill="none" stroke="#2a2a2a"><path d="M1.2 2V21M18.8 2V21" stroke-width="2.2"/><path d="M5.2 2V19.5M8.2 2V19.5M14.5 2V19.5" stroke-width="1"/><path d="M11.4 2V23.5" stroke-width="1"/></g></svg>
<svg class="abs" style="left:1261px;top:854.5px" width="12" height="18" viewBox="-6 -9 12 18"><path d="M3.2 -6.5L-3.2 0L3.2 6.5" fill="none" stroke="#666" stroke-width="2"/></svg>
<div class="abs cat" style="top:880px"></div>
<div class="t catname" style="top:887.3px">Velocidad</div>
<svg class="abs" style="left:810px;top:886px" width="20" height="20" viewBox="0 0 20 20"><g fill="none" stroke="#2a2a2a" stroke-width="1"><circle cx="10" cy="10" r="9.3"/><path d="M10 1.5V3.5M4 4L5.4 5.4M16 4L14.6 5.4M1.5 10H3.5M18.5 10H16.5"/></g><path d="M9 11L13 4.2L11.2 11.6Z" fill="#2a2a2a"/></svg>
<svg class="abs" style="left:1261px;top:886.5px" width="12" height="18" viewBox="-6 -9 12 18"><path d="M3.2 -6.5L-3.2 0L3.2 6.5" fill="none" stroke="#666" stroke-width="2"/></svg>
<div class="t row" style="left:808px;top:346px">Altura de capa</div>
<svg class="abs" style="left:1095px;top:343.5px" width="18" height="18" viewBox="-9 -9 18 18"><g fill="none" stroke="#606060" stroke-width="2.1" transform="rotate(-45)"><rect x="-9.6" y="-3.3" width="8.6" height="6.6" rx="3"/><rect x="1" y="-3.3" width="8.6" height="6.6" rx="3"/><path d="M-3.4 0H3.4"/></g></svg>
<div class="abs inp" style="top:337px"></div>
<div class="t val" style="top:346px">0.2</div>
<div class="t unit" style="right:114px;top:346px">mm</div>
<div class="t row" style="left:808px;top:378px">Altura de capa inicial</div>
<svg class="abs" style="left:1095px;top:375.5px" width="18" height="18" viewBox="-9 -9 18 18"><g fill="none" stroke="#606060" stroke-width="2.1" transform="rotate(-45)"><rect x="-9.6" y="-3.3" width="8.6" height="6.6" rx="3"/><rect x="1" y="-3.3" width="8.6" height="6.6" rx="3"/><path d="M-3.4 0H3.4"/></g></svg>
<div class="abs inp" style="top:369px"></div>
<div class="t val" style="top:378px">0.2</div>
<div class="t unit" style="right:114px;top:378px">mm</div>
<div class="t row" style="left:808px;top:410px">Ancho de línea</div>
<div class="abs inp" style="top:401px"></div>
<div class="t val" style="top:410px">0.4</div>
<div class="t unit" style="right:114px;top:410px">mm</div>
<div class="t row" style="left:829px;top:442px">Ancho de línea de pared</div>
<div class="abs inp" style="top:433px"></div>
<div class="t val" style="top:442px">0.4</div>
<div class="t unit" style="right:114px;top:442px">mm</div>
<div class="t row" style="left:850px;top:474px">Ancho de línea de la pared exterior</div>
<div class="abs inp" style="top:465px"></div>
<div class="t val" style="top:474px">0.4</div>
<div class="t unit" style="right:114px;top:474px">mm</div>
<div class="t row" style="left:850px;top:506px">Ancho de línea de pared(es) interna(s)</div>
<div class="abs inp" style="top:497px"></div>
<div class="t val" style="top:506px">0.4</div>
<div class="t unit" style="right:114px;top:506px">mm</div>
<div class="t row" style="left:829px;top:538px">Ancho de línea superior/inferior</div>
<div class="abs inp" style="top:529px"></div>
<div class="t val" style="top:538px">0.4</div>
<div class="t unit" style="right:114px;top:538px">mm</div>
<div class="t row" style="left:829px;top:570px">Ancho de línea de relleno</div>
<div class="abs inp" style="top:561px"></div>
<div class="t val" style="top:570px">0.4</div>
<div class="t unit" style="right:114px;top:570px">mm</div>
<div class="t row" style="left:829px;top:602px">Ancho de línea de falda/borde</div>
<div class="abs inp" style="top:593px"></div>
<div class="t val" style="top:602px">0.4</div>
<div class="t unit" style="right:114px;top:602px">mm</div>
<div class="t row" style="left:829px;top:634px">Ancho de línea de soporte</div>
<svg class="abs" style="left:1095px;top:631.5px" width="18" height="18" viewBox="-9 -9 18 18"><g fill="none" stroke="#606060" stroke-width="2.1" transform="rotate(-45)"><rect x="-9.6" y="-3.3" width="8.6" height="6.6" rx="3"/><rect x="1" y="-3.3" width="8.6" height="6.6" rx="3"/><path d="M-3.4 0H3.4"/></g></svg>
<div class="abs inp" style="top:625px"></div>
<div class="t val" style="top:634px">0.4</div>
<div class="t unit" style="right:114px;top:634px">mm</div>
<div class="t row" style="left:829px;top:666px">Ancho de línea de interfaz de soporte</div>
<svg class="abs" style="left:1095px;top:663.5px" width="18" height="18" viewBox="-9 -9 18 18"><g fill="none" stroke="#606060" stroke-width="2.1" transform="rotate(-45)"><rect x="-9.6" y="-3.3" width="8.6" height="6.6" rx="3"/><rect x="1" y="-3.3" width="8.6" height="6.6" rx="3"/><path d="M-3.4 0H3.4"/></g></svg>
<div class="abs inp" style="top:657px"></div>
<div class="t val" style="top:666px">0.4</div>
<div class="t unit" style="right:114px;top:666px">mm</div>
<div class="t row" style="left:850px;top:698px">Ancho de línea del techo de soporte</div>
<svg class="abs" style="left:1095px;top:695.5px" width="18" height="18" viewBox="-9 -9 18 18"><g fill="none" stroke="#606060" stroke-width="2.1" transform="rotate(-45)"><rect x="-9.6" y="-3.3" width="8.6" height="6.6" rx="3"/><rect x="1" y="-3.3" width="8.6" height="6.6" rx="3"/><path d="M-3.4 0H3.4"/></g></svg>
<div class="abs inp" style="top:689px"></div>
<div class="t val" style="top:698px">0.4</div>
<div class="t unit" style="right:114px;top:698px">mm</div>
<div class="t row" style="left:850px;top:730px">Ancho de línea del suelo de soporte</div>
<svg class="abs" style="left:1095px;top:727.5px" width="18" height="18" viewBox="-9 -9 18 18"><g fill="none" stroke="#606060" stroke-width="2.1" transform="rotate(-45)"><rect x="-9.6" y="-3.3" width="8.6" height="6.6" rx="3"/><rect x="1" y="-3.3" width="8.6" height="6.6" rx="3"/><path d="M-3.4 0H3.4"/></g></svg>
<div class="abs inp" style="top:721px"></div>
<div class="t val" style="top:730px">0.4</div>
<div class="t unit" style="right:114px;top:730px">mm</div>
<div class="t row" style="left:808px;top:762px">Ancho de línea de la capa inicial</div>
<div class="abs inp" style="top:753px"></div>
<div class="t val" style="top:762px">100.0</div>
<div class="t unit" style="right:114px;top:762px">%</div>
</div></div>
<div class="abs" style="left:1300px;top:304px;width:11px;height:182px;border-radius:5.5px;background:#0a0850"></div>
<div id="pfoot" class="abs"></div>
<div id="pdrag" class="abs"></div>
<div class="abs" style="left:782px;top:914px;width:169px;height:39px;background:#f0f0f0;border-radius:2px;box-shadow:0 1.5px 0 #d4d4d4"></div>
<div class="t" style="left:821px;top:926.3px;font-size:17.5px;color:#1e6ee6;letter-spacing:.15px">Recomendado</div>
<svg class="abs" style="left:798px;top:924.6px" width="12" height="18" viewBox="-6 -9 12 18"><path d="M3.2 -6.5L-3.2 0L3.2 6.5" fill="none" stroke="#1e6ee6" stroke-width="2.3"/></svg>
<svg class="abs" style="left:1036px;top:966px" width="30" height="10" viewBox="0 0 30 10"><circle cx="6" cy="5" r="1.8" fill="#555"/><circle cx="14.7" cy="5" r="1.8" fill="#555"/><circle cx="23.4" cy="5" r="1.8" fill="#555"/></svg><svg class="abs" style="left:0;top:0;pointer-events:none" width="1396" height="990" viewBox="0 0 1396 990"><g fill="none" stroke="#f5c30a" stroke-width="7.5" stroke-linecap="round" stroke-linejoin="round"><path d="M306 13.8L318.5 14.3L533 15.3L563 106.8L306.5 107.3L320 16" stroke-width="8.8"/><path d="M484.5 152L468 101M461 131L468 101L485 117"/><path d="M1345.5 547L1352.7 639M1339.5 627L1352.7 640L1363.5 619"/><path d="M40.5 907.5L79 936M81.7 924.5L94 948L66 946.5"/><path d="M246 939L388 932M358.5 922L388.5 932L367 944"/></g></svg>
</body>
</html>
